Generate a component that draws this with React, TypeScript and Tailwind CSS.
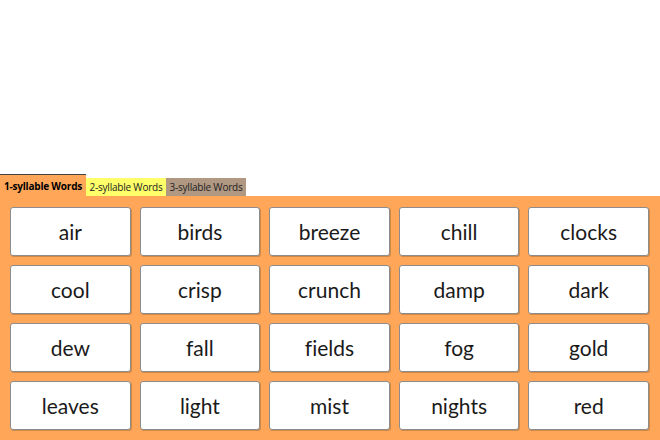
const words = [
  "air", "birds", "breeze", "chill", "clocks",
  "cool", "crisp", "crunch", "damp", "dark",
  "dew", "fall", "fields", "fog", "gold",
  "leaves", "light", "mist", "nights", "red",
];

const tabs = [
  { label: "1-syllable Words", cls: "w-[86px] bg-[#ffa658] font-bold text-black h-[22px] border-t border-[#444]" },
  { label: "2-syllable Words", cls: "w-[80px] bg-[#ffff6a] text-[#222] h-[18px]" },
  { label: "3-syllable Words", cls: "w-[80px] bg-[#b09882] text-[#222] h-[18px]" },
];

export default function App() {
  return (
    <div className="w-[660px] h-[440px] bg-white flex flex-col overflow-hidden" style={{ fontFamily: '"Open Sans", "Noto Sans", sans-serif' }}>
      <div className="flex-1" />
      {/* tabs */}
      <div className="flex items-end h-[22px]">
        {tabs.map((t) => (
          <div
            key={t.label}
            className={`flex items-center justify-center text-[10px] leading-none tracking-[-0.2px] ${t.cls}`}
          >
            {t.label}
          </div>
        ))}
      </div>

      {/* word grid */}
      <div className="h-[244px] bg-[#ffa658] pl-[10px] pr-[11px] pt-[11px]">
        <div className="grid grid-cols-5 gap-x-[9px] gap-y-[9px]">
          {words.map((w) => (
            <div
              key={w}
              className="h-[49px] bg-white border border-[#8c8c8c] rounded-[3px] shadow-[1px_1px_0_rgba(120,80,40,0.35)] flex items-center justify-center text-[21px] text-[#1a1a1a] [font-variant-ligatures:none]"
              style={{ fontFamily: '"Lato", "Open Sans", sans-serif' }}
            >
              {w}
            </div>
          ))}
        </div>
      </div>
    </div>
  );
}
